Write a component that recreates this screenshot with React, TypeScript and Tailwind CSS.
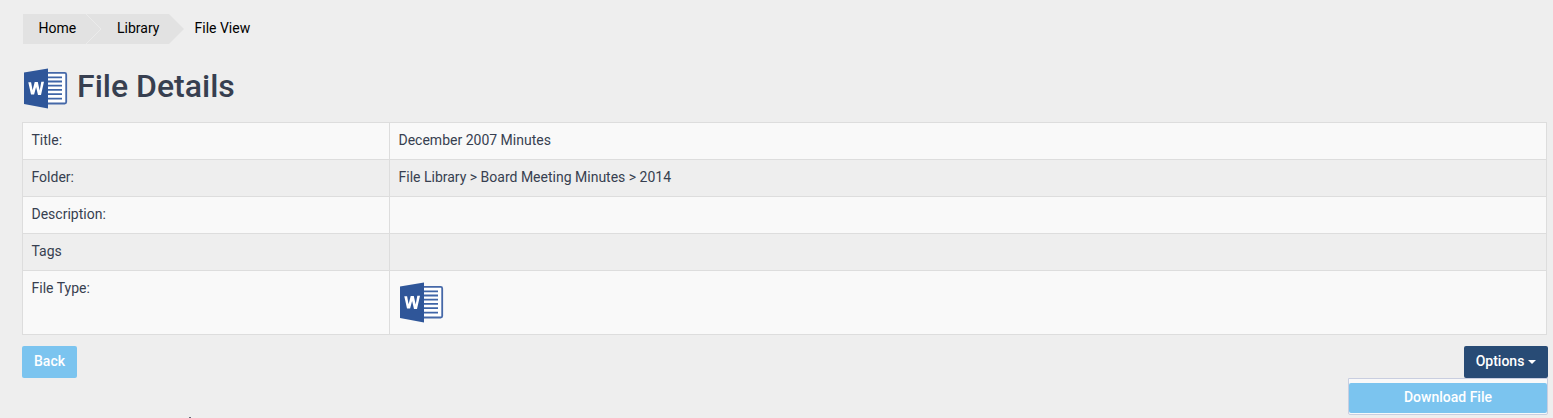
import type { ReactNode } from "react"

function WordIcon() {
  return (
    <svg width="48" height="48" viewBox="0 0 48 48" className="block shrink-0">
      <rect x="24" y="8.9" width="20.2" height="30.6" rx="1.5" fill="#fff" stroke="#4568a8" strokeWidth="1.8" />
      <path
        d="M25 13.3h15M25 17.5h15M25 21.7h15M25 25.9h15M25 30.1h15M25 34.6h15"
        stroke="#3f65a7"
        strokeWidth="1.8"
      />
      <path d="M2 8.5 26 4.5v40L2 40z" fill="#2f5699" />
      <path
        d="M6.3 18.2h2.8l1.5 8 2.1-8.2h3.1l1.9 8.4 1.6-8.7H22l-3 13.2h-3l-1.9-7.9-2 7.6H9z"
        fill="#fff"
      />
    </svg>
  )
}

const rows: { label: string; value: ReactNode }[] = [
  { label: "Title:", value: "December 2007 Minutes" },
  { label: "Folder:", value: "File Library > Board Meeting Minutes > 2014" },
  { label: "Description:", value: "" },
  { label: "Tags", value: "" },
  { label: "File Type:", value: <WordIcon /> },
]

function Breadcrumb() {
  return (
    <nav className="flex h-[30px] text-black">
      <a className="relative h-[30px] w-[64px] bg-[#e2e2e2] pl-[15.5px] leading-[29px]">
        Home
        {/* arrow edge between the two crumbs */}
        <svg width="17" height="30" className="absolute left-[63px] top-0 z-10">
          <path d="M0 0 15 15 0 30" fill="#e2e2e2" stroke="#ebebeb" strokeWidth="1" />
        </svg>
      </a>
      <a className="h-[30px] w-[97px] bg-[#e2e2e2] pl-[30px] leading-[29px] [clip-path:polygon(0_0,82px_0,97px_50%,82px_100%,0_100%)]">
        Library
      </a>
      <span className="pl-[10.5px] leading-[29px]">File View</span>
    </nav>
  )
}

export default function App() {
  return (
    <div className="h-[418px] overflow-hidden bg-[#eeeeee] pl-[22px] pr-[5px] pt-[14px] font-[Roboto,sans-serif] text-[14px] leading-5 text-[#373f50]">
      <div className="pl-px">
        <Breadcrumb />
      </div>

      <h1 className="mt-5 flex h-12 items-center gap-[7px] text-[32px] font-medium leading-[35px]">
        <WordIcon />
        <span className="-mt-1">File Details</span>
      </h1>

      <table className="mt-[10px] w-[1525px] table-fixed border-collapse">
        <colgroup>
          <col className="w-[367px]" />
          <col />
        </colgroup>
        <tbody>
          {rows.map((row) => (
            <tr key={row.label} className="h-[37px] odd:bg-[#f9f9f9]">
              <td className="border border-[#dddddd] px-[8.5px] pb-[9px] pt-[7px] align-top">{row.label}</td>
              <td className="border border-[#dddddd] px-[8.5px] pb-[8px] pt-[7px] align-top">
                {typeof row.value === "string" ? row.value : <div className="-ml-[0.5px]">{row.value}</div>}
              </td>
            </tr>
          ))}
        </tbody>
      </table>

      <div className="mt-[11px] flex justify-between">
        <button className="h-8 w-[55px] rounded-[2px] bg-[#7bc4ef] pb-0.5 font-medium text-white">Back</button>
        <div className="relative h-8">
          <button className="flex h-8 w-[84px] items-center justify-center gap-1 rounded-[2px] bg-[#284b75] pb-0.5 font-medium text-white">
            Options
            <svg width="8" height="4" className="mt-0.5">
              <path d="M0 0h8L4 4z" fill="currentColor" />
            </svg>
          </button>
          <div className="absolute right-0 top-8 h-[37px] w-[200px] rounded-b-[2px] border border-[#c9cee0] bg-[#f9f9f9] pt-1">
            <a className="block h-[30px] rounded-[2px] bg-[#7bc4ef] text-center font-medium leading-[29px] text-white">
              Download File
            </a>
          </div>
        </div>
      </div>

      {/* tip of the next heading, cut off by the page's lower edge */}
      <div className="ml-[167px] mt-[39px] h-px w-0.5 bg-[#626875]" />
    </div>
  )
}
